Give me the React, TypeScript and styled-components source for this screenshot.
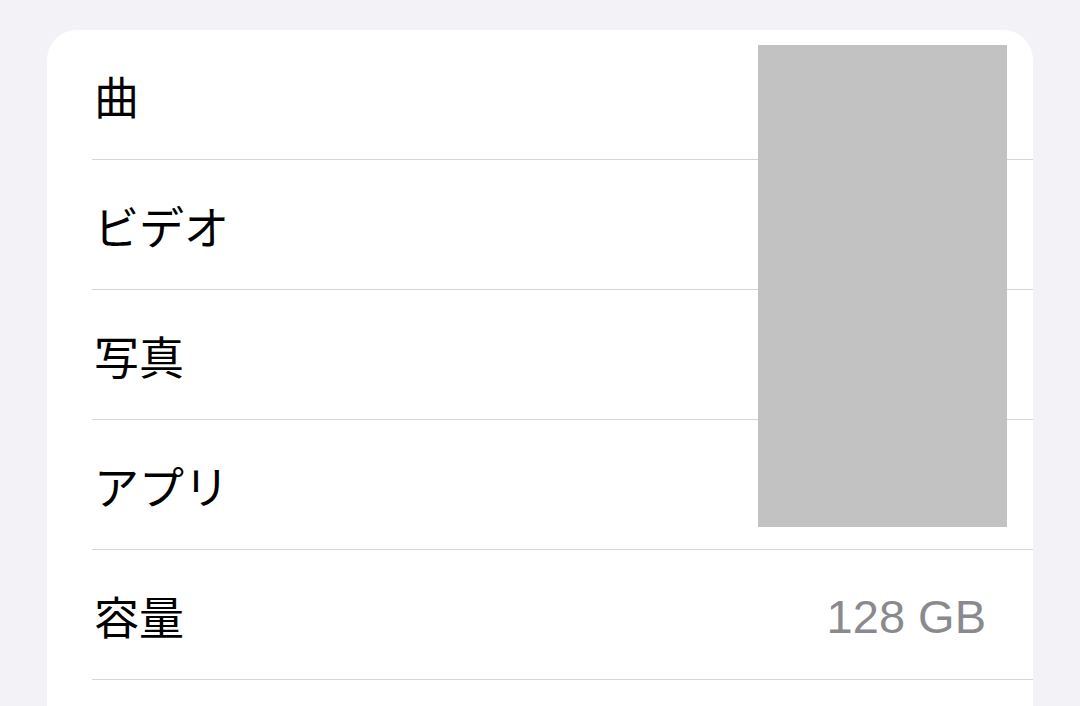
import React from "react";
import styled, { createGlobalStyle } from "styled-components";

const Global = createGlobalStyle`
  html, body { margin: 0; padding: 0; background: #f2f2f7; }
  body { overflow: hidden; }
`;

const Page = styled.div`
  width: 1080px;
  height: 706px;
  box-sizing: border-box;
  padding: 30px 47px 0 47px;
  background: #f2f2f7;
  overflow: hidden;
`;

const Card = styled.div`
  position: relative;
  background: #ffffff;
  border-radius: 30px 30px 0 0;
  padding-left: 45px;
  height: 800px;
`;

const Row = styled.div`
  display: flex;
  align-items: center;
  justify-content: space-between;
  height: 129px;
  padding-right: 47px;
  border-bottom: 1px solid #d6d6d9;
`;

const Label = styled.span`
  font-family: "Noto Sans CJK JP", "Noto Sans", sans-serif;
  font-size: 45px;
  color: #000000;
  margin-left: 2px;
  margin-top: 2px;
`;

const Value = styled.span`
  font-family: "Liberation Sans", Arial, sans-serif;
  font-size: 47px;
  color: #8a8a8e;
  margin-top: 4px;
`;

const Redaction = styled.div`
  position: absolute;
  left: 711px;
  top: 15px;
  width: 249px;
  height: 482px;
  background: #c2c2c2;
`;

const rows: { label: string; value?: string }[] = [
  { label: "曲" },
  { label: "ビデオ" },
  { label: "写真" },
  { label: "アプリ" },
  { label: "容量", value: "128 GB" },
  { label: "" },
];

export default function App() {
  return (
    <>
      <Global />
      <Page>
        <Card>
          {rows.map((r, i) => (
            <Row key={i}>
              <Label>{r.label}</Label>
              {r.value && <Value>{r.value}</Value>}
            </Row>
          ))}
          <Redaction />
        </Card>
      </Page>
    </>
  );
}
